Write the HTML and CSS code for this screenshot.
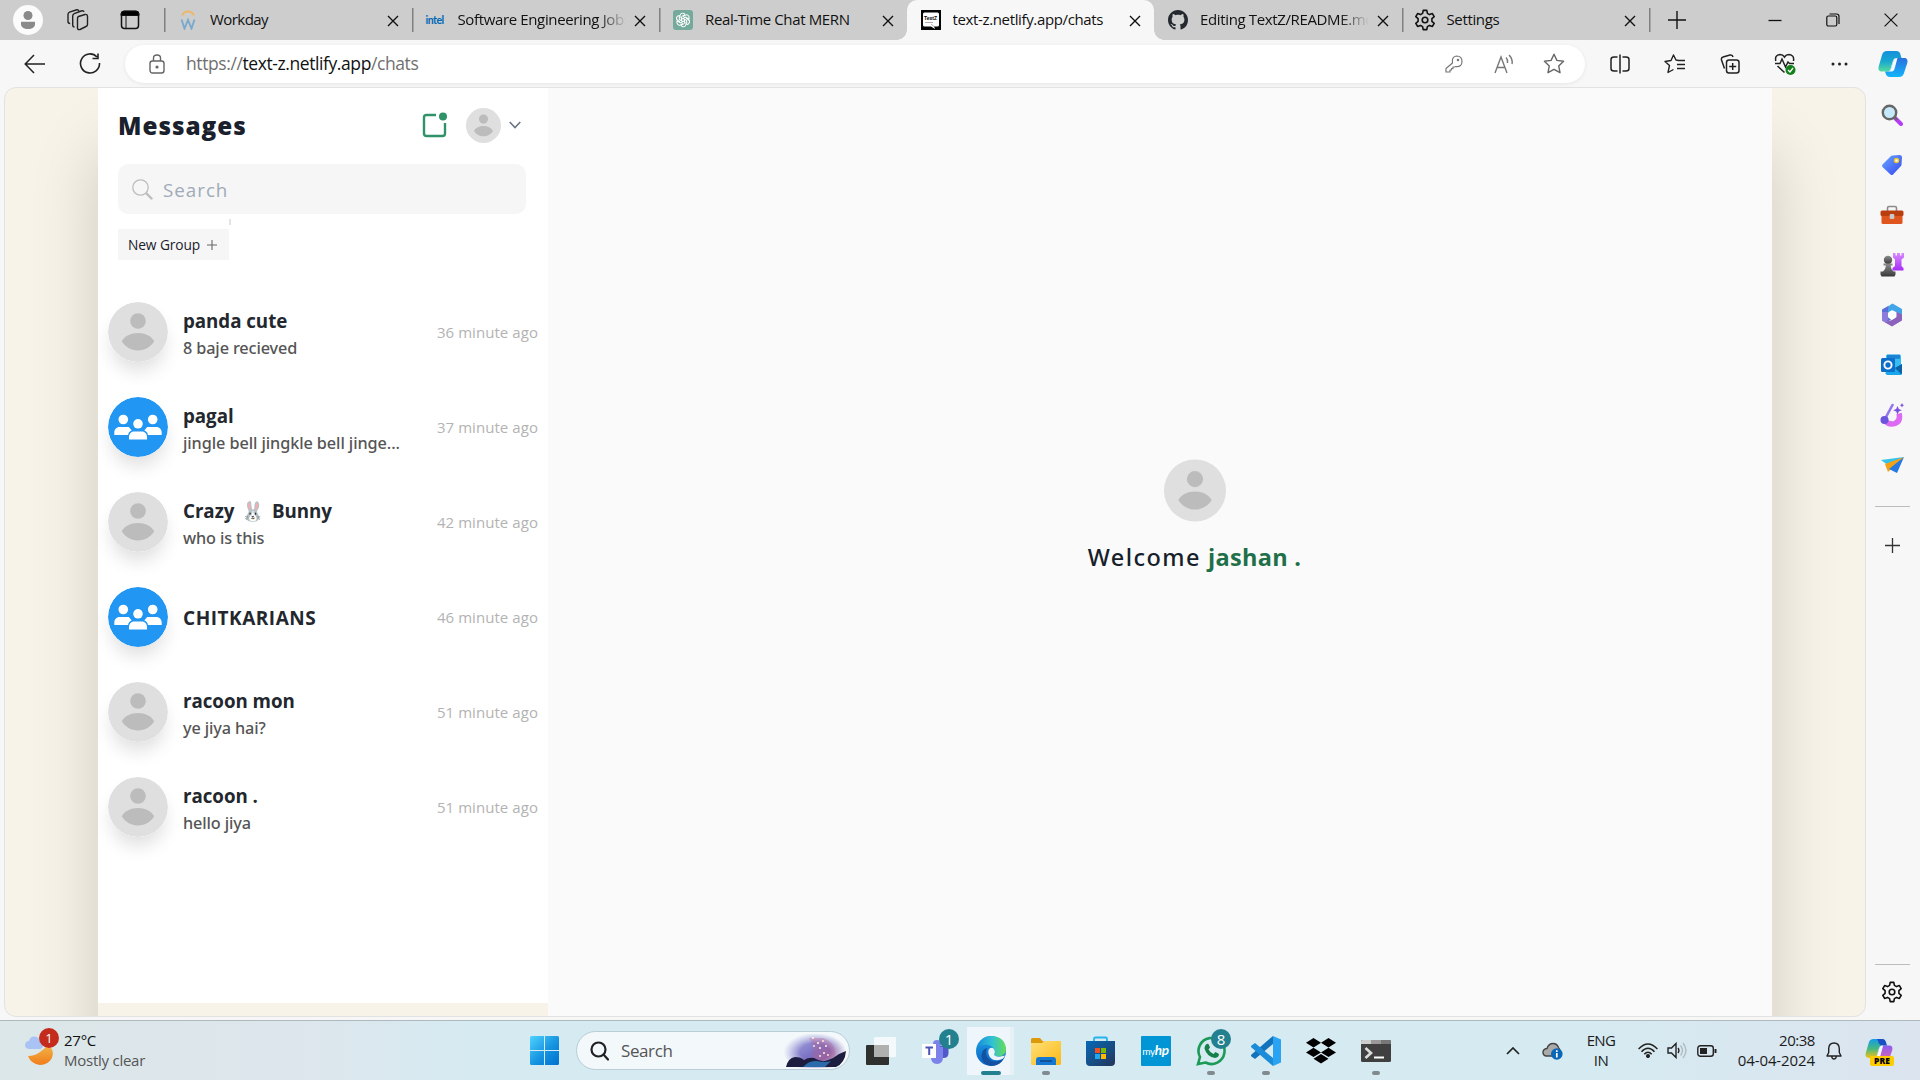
FILE: index.html
```html
<!DOCTYPE html>
<html lang="en">
<head>
<meta charset="utf-8">
<title>text-z.netlify.app/chats</title>
<link rel="stylesheet" href="styles.css">
</head>
<body>
<svg class="defs" aria-hidden="true">
  <defs>
    <linearGradient id="gWin" x1="0" y1="0" x2="1" y2="1"><stop offset="0" stop-color="#4fd3ff"/><stop offset=".55" stop-color="#1593e0"/><stop offset="1" stop-color="#0070d0"/></linearGradient>
    <linearGradient id="gEdgeA" x1="0" y1="0" x2="1" y2="0"><stop offset="0" stop-color="#1b8fd8"/><stop offset=".5" stop-color="#2fc1d6"/><stop offset="1" stop-color="#66dd55"/></linearGradient>
    <linearGradient id="gEdgeB" x1="0" y1="0" x2="0" y2="1"><stop offset="0" stop-color="#1da1e6"/><stop offset="1" stop-color="#0a62c4"/></linearGradient>
    <linearGradient id="gFolder" x1="0" y1="0" x2="1" y2="1"><stop offset="0" stop-color="#ffe07a"/><stop offset="1" stop-color="#fbb915"/></linearGradient>
    <linearGradient id="gStore" x1="0" y1="0" x2="1" y2="1"><stop offset="0" stop-color="#0669b8"/><stop offset="1" stop-color="#243559"/></linearGradient>
    <linearGradient id="gMoon" x1="0" y1="0" x2="0" y2="1"><stop offset="0" stop-color="#f2b54a"/><stop offset="1" stop-color="#f07d1a"/></linearGradient>
    <linearGradient id="gCopL" x1="0" y1="0" x2="0" y2="1"><stop offset="0" stop-color="#1590dd"/><stop offset=".5" stop-color="#18a8cf"/><stop offset="1" stop-color="#55dba0"/></linearGradient>
    <linearGradient id="gCopR" x1="0" y1="0" x2="0" y2="1"><stop offset="0" stop-color="#2a70de"/><stop offset="1" stop-color="#13b5fb"/></linearGradient>
    <linearGradient id="gPreL" x1="0" y1="0" x2="0" y2="1"><stop offset="0" stop-color="#149be8"/><stop offset=".5" stop-color="#42b883"/><stop offset="1" stop-color="#f2c314"/></linearGradient>
    <linearGradient id="gPreR" x1="0" y1="0" x2="0" y2="1"><stop offset="0" stop-color="#8a5cf2"/><stop offset="1" stop-color="#f0699a"/></linearGradient>
    <linearGradient id="gTag" x1="0" y1="0" x2="1" y2="1"><stop offset="0" stop-color="#6aaaff"/><stop offset="1" stop-color="#3545f0"/></linearGradient>
    <linearGradient id="gPawn" x1="0" y1="0" x2="0" y2="1"><stop offset="0" stop-color="#8d8d8d"/><stop offset="1" stop-color="#383838"/></linearGradient>
    <linearGradient id="gRook" x1="0" y1="0" x2="0" y2="1"><stop offset="0" stop-color="#d78bff"/><stop offset="1" stop-color="#a72cf7"/></linearGradient>
    <linearGradient id="gSky" x1="0" y1="0" x2="1" y2="1"><stop offset="0" stop-color="#b9c0ec"/><stop offset=".5" stop-color="#7c72c4"/><stop offset="1" stop-color="#a04f7f"/></linearGradient>
    <radialGradient id="gFade"><stop offset=".45" stop-color="#fff"/><stop offset=".95" stop-color="#000"/></radialGradient>
    <mask id="mSky"><ellipse cx="32" cy="18" rx="33" ry="20" fill="url(#gFade)"/></mask>

    <symbol id="x" viewBox="0 0 12 12"><path d="M1 1l10 10M11 1L1 11" stroke="currentColor" stroke-width="1.4" fill="none"/></symbol>
    <symbol id="plus" viewBox="0 0 18 18"><path d="M9 0v18M0 9h18" stroke="currentColor" stroke-width="1.4"/></symbol>
    <symbol id="avatar" viewBox="0 0 60 60"><circle cx="30" cy="30" r="30" fill="#dfdfdf"/><circle cx="30" cy="19" r="7.8" fill="#bcbcbc"/><path d="M13.8 39.3C16.5 34 23 31 30 31s13.500 3 16.200 8.300C43 44.700 37 48.500 30 48.500s-13-3.800-16.200-9.200z" fill="#bcbcbc"/></symbol>
    <symbol id="group" viewBox="0 0 60 60"><circle cx="30" cy="30" r="30" fill="#2196f3"/><g fill="#fff"><circle cx="15.300" cy="22.500" r="4.800"/><circle cx="44.700" cy="22.500" r="4.800"/><path d="M6.300 38v-2.500c0-3 2-5.500 5.500-5.500h9l3 3.500-3 4.500zM53.700 38v-2.500c0-3-2-5.500-5.500-5.500h-9l-3 3.500 3 4.500z"/></g><circle cx="30" cy="26.800" r="5.800" fill="#2196f3"/><path d="M20 43.500V39c0-3.500 2.500-6 6-6h8c3.500 0 6 2.500 6 6v4.500z" fill="#2196f3"/><circle cx="30" cy="26.800" r="4.800" fill="#fff"/><path d="M21 42.500V40c0-3.500 2.500-5.500 5.500-5.500h7c3 0 5.500 2 5.500 5.500v2.500z" fill="#fff"/></symbol>
    <symbol id="gear" viewBox="0 0 22 22"><path d="M9.200.9h3.600l.6 3 2.100 1.200 2.900-1 1.800 3.100-2.300 2v2.600l2.300 2-1.800 3.100-2.900-1-2.100 1.200-.6 3H9.200l-.6-3-2.100-1.200-2.900 1-1.800-3.100 2.300-2V9.200l-2.300-2 1.800-3.100 2.900 1 2.100-1.200z" transform="translate(0 .5)" fill="none" stroke="currentColor" stroke-width="1.600" stroke-linejoin="round"/><circle cx="11" cy="11" r="2.800" fill="none" stroke="currentColor" stroke-width="1.600"/></symbol>
    <symbol id="copilot" viewBox="0 0 30 28"><path d="M9 1h9c3 0 4 1.500 4.600 4L23.500 8H19c-2.500 0-3.600 1-4.300 3.500L12.500 19c-.7 2-1.800 2.500-3.500 2.500H4c-3 0-4-2-3.300-5L4 5c.8-2.700 2.300-4 5-4z" fill="url(#gCopL)"/><path d="M21 27h-9c-2.500 0-3.700-1.200-4.300-3.500L7 21.500h2.500c2 0 3-1 3.600-3L15.400 11c.7-2.300 1.900-3 4.100-3H26c3 0 4 2 3.300 5L26 23c-.8 2.700-2.300 4-5 4z" fill="url(#gCopR)"/><path d="M15.400 11c.7-2.300 1.900-3 4.100-3l-3 11c-.7 2-1.800 2.500-3.500 2.500H9.500c2 0 3-1 3.600-3z" fill="#f4fbff"/></symbol>
  </defs>
</svg>

<header class="tabs">
  <div class="tab-tools">
    <svg width="30" height="30" viewBox="0 0 30 30"><circle cx="15" cy="15" r="15" fill="#fbfbfb"/><circle cx="15" cy="10.500" r="4.500" fill="#8a8a8a"/><path d="M8 16.800h14V19c0 3.500-3 5-7 5s-7-1.500-7-5z" fill="#8a8a8a"/></svg>
    <svg class="ws" width="22" height="22" viewBox="0 0 22 22" fill="none" stroke="#222" stroke-width="1.400" stroke-linejoin="round"><path d="M11.500 7.500l6.500-2q2.500-.5 2.500 2v8q0 1.500-1.500 2l-6 3q-2.500.5-2.500-1.500V9.500q0-1.500 1-2zM7.500 18q-1.800 0-1.800-2V7q0-1.700 1.500-2.300l7-2.700q2.300-.7 2.800 1M3.200 14.500Q1 14.500 1 12.500v-7q0-1.700 1.500-2.300L9 1q2.300-.7 2.800 1"/></svg>
    <svg class="ta" width="20" height="20" viewBox="0 0 20 20"><rect x="1.500" y="1.500" width="17" height="17" rx="3" fill="none" stroke="#111" stroke-width="1.500"/><path d="M1 5.500V4q0-3 3-3h12q3 0 3 3v1.500zM6 6v12.500" fill="#000" stroke="#111" stroke-width="1"/></svg>
  </div>
  <div class="tab sep">
    <svg class="fav" width="20" height="20" viewBox="0 0 20 20"><path d="M4 5.500a6.500 6.500 0 0 1 12 0" fill="none" stroke="#efb868" stroke-width="1.800"/><path d="M3.500 9.500l3 9L10 10l3.500 8.500 3-9" fill="none" stroke="#79a9cc" stroke-width="1.900"/></svg>
    <span class="title t-workday">Workday</span><svg class="close"><use href="#x"/></svg>
  </div>
  <div class="tab sep">
    <span class="fav intel">intel</span>
    <span class="title fade">Software Engineering Jobs</span><svg class="close"><use href="#x"/></svg>
  </div>
  <div class="tab sep">
    <svg class="fav" width="20" height="20" viewBox="0 0 20 20"><rect width="20" height="20" rx="3" fill="#74aa9c"/><g fill="none" stroke="#fff" stroke-width="1"><path id="petal" d="M7 8.200V5.800q0-2.600 2.700-2.600 1.600 0 2.400 1.200L8.600 6.500v4.600"/><use href="#petal" transform="rotate(60 10 10)"/><use href="#petal" transform="rotate(120 10 10)"/><use href="#petal" transform="rotate(180 10 10)"/><use href="#petal" transform="rotate(240 10 10)"/><use href="#petal" transform="rotate(300 10 10)"/></g></svg>
    <span class="title">Real-Time Chat MERN</span><svg class="close"><use href="#x"/></svg>
  </div>
  <div class="tab active">
    <svg class="fav" width="20" height="20" viewBox="0 0 20 20"><rect width="20" height="20" fill="#050505"/><path d="M3.500 2.500h13q1.500 0 1.500 1.500v11q0 1.500-1.500 1.500H13l1 2.500-4-2.500H3.500Q2 16.500 2 15V4q0-1.500 1.500-1.500z" fill="#fff"/><text x="3" y="9.500" class="txz">TextZ</text><path d="M4 12.500h8M10 14l3 2.500" stroke="#999" stroke-width=".8"/></svg>
    <span class="title">text-z.netlify.app/chats</span><svg class="close"><use href="#x"/></svg>
  </div>
  <div class="tab">
    <svg class="fav" width="20" height="20" viewBox="0 0 16 16"><path fill="#24292f" d="M8 0C3.580 0 0 3.580 0 8c0 3.540 2.290 6.530 5.470 7.590.4.070.55-.17.55-.38 0-.19-.01-.82-.01-1.490-2.010.37-2.530-.49-2.690-.94-.09-.23-.48-.94-.82-1.130-.28-.15-.68-.52-.01-.53.630-.01 1.080.58 1.230.82.720 1.210 1.870.87 2.330.66.070-.52.280-.87.510-1.070-1.780-.2-3.640-.89-3.640-3.950 0-.87.310-1.590.82-2.150-.08-.2-.36-1.020.08-2.120 0 0 .67-.21 2.200.82.640-.18 1.320-.27 2-.27s1.360.09 2 .27c1.530-1.040 2.200-.82 2.200-.82.440 1.100.16 1.920.08 2.120.51.560.82 1.270.82 2.150 0 3.070-1.870 3.750-3.650 3.950.29.25.54.73.54 1.480 0 1.070-.01 1.930-.01 2.200 0 .21.15.46.55.38A8.010 8.010 0 0 0 16 8c0-4.420-3.580-8-8-8z"/></svg>
    <span class="title fade">Editing TextZ/README.md at</span><svg class="close"><use href="#x"/></svg>
  </div>
  <div class="tab sep">
    <svg class="fav cogfav" width="22" height="22"><use href="#gear"/></svg>
    <span class="title">Settings</span><svg class="close"><use href="#x"/></svg>
  </div>
  <div class="newtab"><svg width="18" height="18"><use href="#plus"/></svg></div>
  <div class="win">
    <svg width="13" height="13" viewBox="0 0 13 13"><path d="M0 6.500h13" stroke="#111" stroke-width="1.300"/></svg>
    <svg width="14" height="14" viewBox="0 0 14 14" fill="none" stroke="#111" stroke-width="1.200"><rect x=".8" y="3" width="10" height="10" rx="1.500"/><path d="M3.500 1h7q2.500 0 2.500 2.500V11"/></svg>
    <svg width="14" height="14" viewBox="0 0 12 12"><path d="M.5.500l11 11M11.500.500l-11 11" stroke="#111" stroke-width="1"/></svg>
  </div>
</header>

<div class="toolbar">
  <div class="nav">
    <svg width="22" height="20" viewBox="0 0 22 20" fill="none" stroke="#222" stroke-width="1.500"><path d="M21 10H1.500M10 1L1.200 10l8.800 9"/></svg>
    <svg width="22" height="22" viewBox="0 0 22 22" fill="none" stroke="#222" stroke-width="1.600"><path d="M18 4A9.500 9.500 0 1 0 20.500 10M19 .5v5h-5.500"/></svg>
  </div>
  <div class="address">
    <svg width="16" height="20" viewBox="0 0 16 20" fill="none" stroke="#666" stroke-width="1.400"><rect x="1" y="7" width="14" height="12" rx="2.500"/><path d="M4.500 7V4q0-3 3.500-3t3.500 3v3"/><circle cx="8" cy="13" r=".9" fill="#666"/></svg>
    <span class="url">https://<b>text-z.netlify.app</b>/chats</span>
    <div class="addr-icons">
      <svg width="18" height="18" viewBox="0 0 18 18" fill="none" stroke="#777" stroke-width="1.200" stroke-linejoin="round"><path d="M1 17v-3.500L7.500 8Q6.500 1.500 11.500 1 17 1 17 6.500T11 11.500L9.500 12H8v1.500H6.500V15H5v2z"/><circle cx="13" cy="5" r=".7"/></svg>
      <svg width="20" height="20" viewBox="0 0 20 20" fill="none" stroke="#777" stroke-width="1.400"><path d="M1 19L7 3l6 16M3.500 13.500h7M12 3.500q2 2 1.500 5.500M15 1q4 4 3 9"/></svg>
      <svg width="22" height="21" viewBox="0 0 22 21" fill="none" stroke="#666" stroke-width="1.400" stroke-linejoin="round"><path d="M11 1.200l2.900 6.200 6.700.8-4.900 4.700 1.300 6.800-6-3.300-6 3.300 1.300-6.800L1.400 8.200l6.700-.8z"/></svg>
    </div>
  </div>
  <div class="ext">
    <svg width="20" height="20" viewBox="0 0 20 20" fill="none" stroke="#222" stroke-width="1.500"><path d="M7.500 3H4Q1 3 1 5.500v9Q1 17 4 17h3.500M12.500 3H16q3 0 3 2.500v9q0 2.500-3 2.500h-3.500M10 .5v19"/></svg>
    <svg width="21" height="20" viewBox="0 0 21 20" fill="none" stroke="#222" stroke-width="1.400" stroke-linejoin="round"><path d="M14.500 6.500L12 6l-2.500-5L7 6.500 1 7.500l4.500 4L4 18.500l5.500-3M14.500 6.500H21M13 10.500h8M13 14.500h8"/></svg>
    <svg width="20" height="20" viewBox="0 0 20 20" fill="none" stroke="#222" stroke-width="1.500"><rect x="6.500" y="6" width="12.500" height="13" rx="2.500"/><path d="M4.500 14.500L1.500 6Q1 3.500 3 3l7-2q2.500-.5 3 2M12.700 9v7M9.200 12.500h7"/></svg>
    <svg width="22" height="22" viewBox="0 0 22 22" fill="none" stroke="#222" stroke-width="1.500"><path d="M1.800 8Q.5 2 6 1.500q3 0 4.500 2.500Q12 1.500 15 1.500 20.500 2 19.500 8M1 10.500h5L8 6l3.500 8L14 9l1.500 1.500H20M3.500 13l7 6.500"/><circle cx="16.500" cy="17" r="5" fill="#12801a" stroke="none"/><path d="M14 17l2 2 3-4" stroke="#fff" stroke-width="1.300"/></svg>
    <svg width="17" height="4" viewBox="0 0 17 4" fill="#222"><circle cx="2" cy="2" r="1.500"/><circle cx="8.500" cy="2" r="1.500"/><circle cx="15" cy="2" r="1.500"/></svg>
    <svg width="30" height="28"><use href="#copilot"/></svg>
  </div>
</div>

<div class="middle">
  <div class="viewport">
    <div class="app">
      <aside class="left">
        <div class="head">
          <h1>Messages</h1>
          <svg width="26" height="26" viewBox="0 0 26 26"><path d="M14 3H4.500Q2 3 2 5.500v16Q2 24 4.500 24h16q2.500 0 2.500-2.500V11" fill="none" stroke="#2f9268" stroke-width="2.400"/><circle cx="21" cy="4.500" r="4" fill="#2f9268"/></svg>
          <svg class="me" width="35" height="35"><use href="#avatar"/></svg>
          <svg width="12" height="8" viewBox="0 0 12 8"><path d="M.7 1L6 6.500 11.300 1" fill="none" stroke="#6b7480" stroke-width="1.600"/></svg>
        </div>
        <div class="search">
          <svg width="21" height="21" viewBox="0 0 21 21" fill="none" stroke="#bdbdbd"><circle cx="8.500" cy="8.500" r="7.700" stroke-width="1.300"/><path d="M14.500 14.500l5 5" stroke-width="2.400" stroke-linecap="round"/></svg>
          <span>Search</span>
        </div>
        <div class="tick"></div>
        <div class="newgroup"><span>New Group</span><svg width="10" height="10" viewBox="0 0 10 10"><path d="M5 0v10M0 5h10" stroke="#666" stroke-width="1.100"/></svg></div>
        <div class="chats">
          <div class="chat"><svg class="pic"><use href="#avatar"/></svg><div class="txt"><b>panda cute</b><span>8 baje recieved</span></div><time>36 minute ago</time></div>
          <div class="chat"><svg class="pic"><use href="#group"/></svg><div class="txt"><b>pagal</b><span class="long">jingle bell jingkle bell jinge...</span></div><time>37 minute ago</time></div>
          <div class="chat"><svg class="pic"><use href="#avatar"/></svg><div class="txt"><b class="bunny">Crazy <i>🐰</i> Bunny</b><span>who is this</span></div><time>42 minute ago</time></div>
          <div class="chat"><svg class="pic"><use href="#group"/></svg><div class="txt"><b class="caps">CHITKARIANS</b></div><time>46 minute ago</time></div>
          <div class="chat"><svg class="pic"><use href="#avatar"/></svg><div class="txt"><b>racoon mon</b><span>ye jiya hai?</span></div><time>51 minute ago</time></div>
          <div class="chat"><svg class="pic"><use href="#avatar"/></svg><div class="txt"><b>racoon .</b><span>hello jiya</span></div><time>51 minute ago</time></div>
        </div>
      </aside>
      <main class="right">
        <svg width="62" height="63"><use href="#avatar"/></svg>
        <p><span class="wel">Welcome</span><b>jashan .</b></p>
      </main>
    </div>
  </div>
  <nav class="side">
    <svg width="22" height="22" viewBox="0 0 22 22"><path d="M14 14l6 6" stroke="#b53cf5" stroke-width="4" stroke-linecap="round"/><path d="M13 13l3 3" stroke="#666" stroke-width="2"/><circle cx="8.500" cy="8.500" r="6.700" fill="#c5e8fa" stroke="#666" stroke-width="2.400"/></svg>
    <svg width="22" height="22" viewBox="0 0 22 22"><path d="M11.500 1.500L18.500 1q2.500 0 2.500 2.500l-.5 7q0 1-1 2l-7.500 8q-1 1-2.500 0l-8-7.500q-1-1.200 0-2.500l8-8q1-1 2-1z" fill="url(#gTag)"/><circle cx="15.500" cy="6.500" r="2" fill="#fff" stroke="#f3c622" stroke-width="1.500"/></svg>
    <svg width="24" height="20" viewBox="0 0 24 20"><path d="M7.500 6V3q0-1.500 1.500-1.500h6q1.500 0 1.500 1.500v3" fill="none" stroke="#8b8b8b" stroke-width="1.600"/><rect x="1.500" y="9" width="21" height="10" rx="1.500" fill="#e0551d"/><rect x=".5" y="5.500" width="23" height="5.500" rx="1.500" fill="#b83e10"/><rect x="9.700" y="9" width="4.600" height="5" rx="1" fill="#c9c9c9"/></svg>
    <svg width="24" height="24" viewBox="0 0 24 24"><path d="M13 0h2.500v2.500H17V0h3v2.500h1.500V0H24v4.500l-2.500 2V13l2 2v2.500H12.500V15l2.500-2V6.500l-2-2z" fill="url(#gRook)"/><circle cx="8" cy="7" r="4.200" fill="url(#gPawn)"/><path d="M3.500 10.500h9v2H10.500q.5 4 3 6H15.500v3l-1 2H1.500l-1-2v-3H3q2.500-2 3-6H3.500z" fill="url(#gPawn)"/></svg>
    <svg width="22" height="24" viewBox="0 0 22 24"><path d="M9 2l2.500-1.500L21 6v7l-6-4-4-2-4 3V4.500z" fill="#41a5e8"/><path d="M8 2.500L1 6.500v11L6 19l4-2.500L7 14V6z" fill="#5b6fd8"/><path d="M1.500 18l9.500 5.500 10-6v-6L15.500 9v5L11 17l-5 1.500z" fill="#8b63bd"/><path d="M1 9v8.500L5 19l2-3V9z" fill="#8f7bdc"/><circle cx="11" cy="12" r="4" fill="#fff"/></svg>
    <svg width="22" height="22" viewBox="0 0 22 22"><rect x="5" y=".5" width="15" height="20" rx="1.500" fill="#38bdf2"/><path d="M6 .8h13v4H6z" fill="#1b82d4"/><path d="M13 14l8-4v9.500q0 1.500-1.500 1.500H6L4 19z" fill="#1aa6ea"/><path d="M21 10v9q0 1-1 1l-6-6z" fill="#0c62a8"/><rect x="0" y="4" width="14" height="14" rx="1.500" fill="#0c6fc9"/><circle cx="7" cy="11" r="3.600" fill="none" stroke="#fff" stroke-width="1.900"/></svg>
    <svg width="24" height="25" viewBox="0 0 24 25"><path d="M19 10.500q2 7.500-4 10-6 2-10-3" fill="none" stroke="#dd6af3" stroke-width="5.500"/><path d="M12.500 2L6 14" stroke="#9476ee" stroke-width="2.600" stroke-linecap="round"/><circle cx="4.500" cy="17" r="4" fill="#6b55dc"/><path d="M17.500 3l1.300 3 3 1.300-3 1.300-1.300 3-1.300-3-3-1.300 3-1.300zM22 0l.7 1.600L24 2.300l-1.300.7L22 4.600 21.300 3l-1.300-.7 1.300-.7z" fill="#7b4fe0"/></svg>
    <svg width="23" height="17" viewBox="0 0 23 17"><path d="M0 3L23 0 8 9z" fill="#34c3ea"/><path d="M4 7L23 0 7 15z" fill="#f5a114"/><path d="M23 0L8 12l8 4z" fill="#2579e2"/></svg>
    <div class="rule"></div>
    <svg class="add" width="15" height="15" viewBox="0 0 15 15"><path d="M7.500 0v15M0 7.500h15" stroke="#333" stroke-width="1.300"/></svg>
    <div class="rule low"></div>
    <svg class="cog" width="22" height="22"><use href="#gear"/></svg>
  </nav>
</div>

<footer class="taskbar">
  <div class="weather">
    <div class="wicon">
      <svg width="30" height="36" viewBox="0 0 30 36"><path d="M3 25Q10 25 15 21q4-3 8-7 7 5 4 13-4 7-12 7Q6 33 3 25z" fill="url(#gMoon)"/><path d="M3.500 18Q0 17 0 14q.5-4 4-4 1-5 6-4.500 4 .5 5 4.500 3 .5 3 4t-3 4z" fill="#a9c4f4"/></svg>
      <span class="badge red">1</span>
    </div>
    <div class="wtext"><span>27°C</span><span class="sub">Mostly clear</span></div>
  </div>
  <svg class="start" width="29" height="29" viewBox="0 0 29 29"><path d="M1.500 0H14v14H0V1.500Q0 0 1.500 0zM15 0h12.500Q29 0 29 1.500V14H15zM0 15h14v14H1.500Q0 29 0 27.500zM15 15h14v12.500q0 1.500-1.500 1.500H15z" fill="url(#gWin)"/></svg>
  <div class="tsearch">
    <svg width="19" height="20" viewBox="0 0 19 20" fill="none" stroke="#222" stroke-width="2.200"><circle cx="8.500" cy="8.500" r="7"/><path d="M13.500 13.500l4.500 5" stroke-linecap="round"/></svg>
    <span>Search</span>
    <svg class="art" width="64" height="34" viewBox="0 0 64 34"><ellipse cx="32" cy="18" rx="33" ry="20" fill="url(#gSky)" mask="url(#mSky)"/><path d="M26 4q6 8 4 14-2 6 8 9l14-4q2-14-12-19z" fill="#c25a86" opacity=".3"/><path d="M3 33q2-9 9-10 6 0 9 3 5-3 10-2 8 5 14 2 6-2 11-6l7-3q-1 12-10 16z" fill="#1c1d3f"/><path d="M20 33q6-7 14-6 8 2 14 0l-6 6z" fill="#2a6bab"/><g fill="#fff3dc"><circle cx="30" cy="4" r="1"/><circle cx="35" cy="9" r="1.100"/><circle cx="40" cy="7" r=".9"/><circle cx="37" cy="14" r="1"/><circle cx="43" cy="12" r="1"/><circle cx="31" cy="12" r=".9"/><circle cx="41" cy="19" r="1"/><circle cx="37" cy="22" r=".9"/><circle cx="45" cy="21" r=".9"/></g></svg>
  </div>
  <div class="apps">
    <div class="appi"><svg width="30" height="28" viewBox="0 0 30 28"><rect y="8" width="23" height="20" rx="1" fill="#30302e"/><rect x="8" y="0" width="22" height="20" rx="1" fill="#fff" opacity=".72"/><rect x="8" y="8" width="15" height="12" fill="#aaa" opacity=".8"/></svg></div>
    <div class="appi teams"><svg width="27" height="28" viewBox="0 0 27 28"><circle cx="15" cy="7" r="4" fill="#7b83eb"/><path d="M18 9h8.500v7q0 5-5 5H18z" fill="#5059c9"/><path d="M9 10h12v10q0 7-6 7t-6-7z" fill="#7b83eb"/><rect x="0" y="7" width="14" height="14" fill="#fff"/><path d="M3.500 10.500h7.500M7.200 10.500V18" stroke="#4b53bc" stroke-width="2"/></svg><span class="badge teal">1</span></div>
    <div class="appi current"><svg width="30" height="30" viewBox="0 0 30 30"><circle cx="15" cy="15" r="15" fill="url(#gEdgeB)"/><path d="M2 11Q5 0 16 0q13 1 14 13 0 7-7 7.500-4 0-5-1.500 2-3 0-6Q14 8 8 9q-4 .5-6 2z" fill="url(#gEdgeA)"/><path d="M11 12q-3 8 3 12 6 4 14-2-4 8-13 8Q6 28 5.500 20 6 13 11 12z" fill="#1352a0"/><path d="M12.500 14q2-3.500 5-1.500 2.500 3 .5 6.500 3 3 11 .5-1.500 4-6 4.500-7 1-9.500-3.500-2-3-1-6.500z" fill="#edf4fb"/></svg><i class="bar"></i></div>
    <div class="appi"><svg width="30" height="28" viewBox="0 0 30 28"><path d="M0 2.500Q0 1 1.500 1H9l3 3.500h18V9H0z" fill="#dc9a0b"/><path d="M0 6h11l3-2h15q1 0 1 1v21.500q0 1.500-1.500 1.500h-27Q0 28 0 26.500z" fill="url(#gFolder)"/><path d="M5 28v-5q0-3 3-3h14q3 0 3 3v5z" fill="#1478d0"/><path d="M9 24h12" stroke="#07498c" stroke-width="1.500"/></svg><i class="dot"></i></div>
    <div class="appi"><svg width="29" height="30" viewBox="0 0 29 30"><path d="M8 6V3q0-1.500 1.500-1.500h10Q21 1.500 21 3v3" fill="none" stroke="#25b3f0" stroke-width="1.800"/><path d="M0 5h29v21q0 4-4 4H4q-4 0-4-4z" fill="url(#gStore)"/><path d="M9 12h5v5H9z" fill="#f25022"/><path d="M15 12h5v5h-5z" fill="#7fba00"/><path d="M9 18h5v5H9z" fill="#20a8ee"/><path d="M15 18h5v5h-5z" fill="#ffb900"/></svg></div>
    <div class="appi"><div class="hp">my<b>hp</b></div></div>
    <div class="appi"><svg width="30" height="30" viewBox="0 0 30 30"><path d="M2 28l2-7A13 13 0 1 1 9.500 26.500z" fill="none" stroke="#1c9a57" stroke-width="2.600"/><path d="M10 8.500q1-1 2.500-.5l1.500 3.500-1.500 2q2 3.500 5 4.500l2-2 3.500 2q0 3.500-4 4Q11 21 8.500 12.500 8.500 10 10 8.500z" fill="#158048"/></svg><span class="badge teal">8</span><i class="dot"></i></div>
    <div class="appi"><svg width="30" height="30" viewBox="0 0 30 30"><path d="M22 0l8 3.500v23L22 30z" fill="#2aa4f2"/><path d="M22 0v8L4 23 .5 20.500Q-.5 19.500.5 18.500z" fill="#1273bd"/><path d="M22 30v-8L4 7 .5 9.500q-1 1 0 2z" fill="#1c8cd8"/></svg><i class="dot"></i></div>
    <div class="appi"><svg width="30" height="26" viewBox="0 0 30 26"><path d="M7.500 0L15 4.700 7.500 9.400 0 4.700zM22.500 0L30 4.700l-7.500 4.700L15 4.700zM7.500 9.700L15 14.400l-7.500 4.700L0 14.400zM22.500 9.700L30 14.400l-7.500 4.700L15 14.400zM15 16l7.500 4.700L15 25.500l-7.500-4.800z" fill="#000"/></svg></div>
    <div class="appi"><svg width="30" height="22" viewBox="0 0 30 22"><rect width="30" height="22" rx="1.500" fill="#404040"/><path d="M0 4V1.500Q0 0 1.500 0H10v4z" fill="#ccc"/><path d="M10 0h10v4H10z" fill="#999"/><path d="M20 0h8.500Q30 0 30 1.500V4H20z" fill="#777"/><path d="M4.500 8l5.500 5-5.500 5" fill="none" stroke="#ddd" stroke-width="2.600"/><path d="M13 17.500h10" stroke="#fff" stroke-width="2"/></svg><i class="dot"></i></div>
  </div>
  <div class="tray">
    <svg width="14" height="8" viewBox="0 0 14 8"><path d="M1 7l6-6 6 6" fill="none" stroke="#222" stroke-width="1.700"/></svg>
    <svg class="cloud" width="21" height="18" viewBox="0 0 21 18"><path d="M4 14Q1 13.500 1 10.500 1 7 5 6.500 6.500 1.500 11 1.500q4 0 5.500 4L18 8l-8 6z" fill="#aaa" stroke="#444" stroke-width="1.400"/><circle cx="14.800" cy="12" r="5.800" fill="#0a67b8"/><path d="M14.800 11v4.500M14.800 8.300v1.700" stroke="#fff" stroke-width="1.700"/></svg>
    <div class="lang"><span>ENG</span><span>IN</span></div>
    <svg class="wifi" width="20" height="15" viewBox="0 0 20 15" fill="none" stroke="#222" stroke-width="1.500"><path d="M.6 6Q10-4 19.400 6M3.500 8.700q6.500-7 13 0M6.300 11.300q3.700-4 7.400 0"/><circle cx="10" cy="13" r="1.300" fill="#222"/></svg>
    <svg class="vol" width="20" height="17" viewBox="0 0 20 17" fill="none" stroke="#222" stroke-width="1.400"><path d="M1 6h3.500L9 1.500v14L4.500 11H1zM11 6q1.800 2.500 0 5"/><path d="M13.500 3.500q4 5 0 10M16 1q6 7.500 0 15" stroke="#b0bcc2"/></svg>
    <svg class="bat" width="20" height="12" viewBox="0 0 20 12"><rect x=".8" y=".8" width="15.500" height="10.400" rx="2.500" fill="none" stroke="#222" stroke-width="1.400"/><rect x="3" y="3" width="7" height="6" fill="#222"/><path d="M17.500 4H19.500v4h-2z" fill="#222"/></svg>
    <div class="clock"><span class="hm">20:38</span><span>04-04-2024</span></div>
    <svg class="bell" width="16" height="18" viewBox="0 0 16 18" fill="none" stroke="#222" stroke-width="1.400" stroke-linejoin="round"><path d="M1 14l1.700-3.500V6.500Q3 1 8 1t5.300 5.500v4L15 14zM5.800 14.500q.2 2.500 2.200 2.500t2.200-2.500"/></svg>
    <div class="pre"><svg width="30" height="26" viewBox="0 0 30 28"><path d="M9 1h9c3 0 4 1.500 4.600 4L23.500 8H19c-2.500 0-3.600 1-4.300 3.500L12.500 19c-.7 2-1.800 2.500-3.500 2.500H4c-3 0-4-2-3.300-5L4 5c.8-2.700 2.300-4 5-4z" fill="url(#gPreL)"/><path d="M13 1h5c3 0 4 1.500 4.600 4L23.500 8H19q-3 0-4-2z" fill="#1d4fc4"/><path d="M21 27h-9c-2.500 0-3.700-1.200-4.300-3.500L7 21.500h2.500c2 0 3-1 3.600-3L15.400 11c.7-2.300 1.900-3 4.100-3H26c3 0 4 2 3.300 5L26 23c-.8 2.700-2.300 4-5 4z" fill="url(#gPreR)"/><path d="M15.400 11c.7-2.300 1.900-3 4.100-3l-3 11c-.7 2-1.800 2.500-3.500 2.500H9.500c2 0 3-1 3.600-3z" fill="#f4fbff"/></svg><span>PRE</span></div>
  </div>
</footer>
</body>
</html>
```
FILE: styles.css
```css
* { box-sizing: border-box; }
body {
  margin: 0;
  width: 1920px;
  height: 1080px;
  overflow: hidden;
  display: flex;
  flex-direction: column;
  background: #f7f7f7;
  font-family: "Open Sans", "Noto Sans", sans-serif;
  color: #111;
}
svg { display: block; flex: none; }
.defs { position: absolute; width: 0; height: 0; }

/* tab strip */
.tabs { height: 40px; flex: none; display: flex; background: #cdcdcd; }
.tab-tools { width: 164px; display: flex; align-items: center; padding-left: 13px; flex: none; }
.ws { margin-left: 24px; }
.ta { margin-left: 31px; }
.tab {
  width: 247.500px;
  flex: none;
  padding: 0 13px 0 14px;
  display: flex;
  align-items: center;
  font-size: 15px;
  letter-spacing: -.36px;
  white-space: nowrap;
}
.tab.sep, .newtab { background: linear-gradient(#808080, #808080) 0 8px / 1.500px 24px no-repeat; }
.tab.active { position: relative; background: #f7f7f7; border-radius: 10px 10px 0 0; }
.tab.active::before, .tab.active::after {
  content: "";
  position: absolute;
  bottom: 0;
  width: 10px;
  height: 10px;
}
.tab.active::before { left: -10px; background: radial-gradient(circle at 0 0, #cdcdcd 9.500px, #f7f7f7 10px); }
.tab.active::after { right: -10px; background: radial-gradient(circle at 100% 0, #cdcdcd 9.500px, #f7f7f7 10px); }
.fav { flex: none; width: 20px; }
.cogfav { width: 22px; margin: 0 -1px 0 -2px; }
.intel { color: #0068b5; font: 700 10.500px "Lato", sans-serif; letter-spacing: -.5px; }
.title { width: 168px; margin-left: 12px; overflow: hidden; line-height: 24px; margin-top: -2px; }
.t-workday { letter-spacing: -.55px; }
.fade { -webkit-mask: linear-gradient(90deg, #000 140px, transparent 169px); mask: linear-gradient(90deg, #000 140px, transparent 169px); }
.close { width: 12px; height: 12px; margin-left: 9px; margin-top: 1px; color: #111; }
.txz { font: 700 5px "Liberation Sans", sans-serif; letter-spacing: 0; }
.newtab { width: 56px; display: flex; align-items: center; justify-content: center; }
.win { margin-left: auto; display: flex; }
.win svg { margin: auto 22px; width: 14px; }

/* address row */
.toolbar { height: 47px; flex: none; display: flex; align-items: center; }
.nav { width: 125px; display: flex; padding-left: 24px; gap: 33px; align-items: center; }
.address {
  width: 1460px;
  height: 38px;
  border-radius: 19px;
  background: #fff;
  box-shadow: 0 1px 4px rgba(0, 0, 0, .07);
  display: flex;
  align-items: center;
  padding-left: 24px;
}
.url { margin-left: 21px; font-size: 17.500px; line-height: 24px; margin-top: -1px; letter-spacing: -.41px; color: #707070; }
.url b { color: #111; font-weight: 400; }
.addr-icons { margin-left: auto; margin-right: 5px; display: flex; align-items: center; }
.addr-icons svg { margin: 0 15px; }
.addr-icons svg:first-child { margin: 0 15px 0 16px; }
.addr-icons svg:nth-child(2) { margin: 0 14px 0 16px; }
.ext { margin-left: 7px; display: grid; grid-template-columns: repeat(5, 55px) 51px; align-items: center; justify-items: center; }

/* page area and sidebar */
.middle { height: 933px; flex: none; display: flex; }
.viewport {
  width: 1862px;
  height: 930px;
  margin-left: 4px;
  border: 1px solid #e2e2e2;
  border-radius: 12px;
  overflow: hidden;
  background: #f8f3e8;
  padding-left: 93px;
}
.app { width: 1674px; height: 930px; display: flex; background: #f8f3e8; box-shadow: 0 64px 62px rgba(0, 0, 0, .17); }
.left { width: 450px; height: 915px; background: #fff; display: flex; flex-direction: column; }
.right { flex: 1; background: #fafafa; display: flex; flex-direction: column; align-items: center; padding-top: 371px; }
.right svg { margin-right: -69px; }
.right p { margin: 12px -69px 0 0; line-height: 46px; display: flex; font-size: 23.500px; gap: 7px; }
.wel { font-family: "Noto Sans", sans-serif; font-weight: 500; letter-spacing: 1.450px; color: #16202a; }
.right b { color: #1f7048; letter-spacing: .3px; }

.head { height: 74px; margin-bottom: 2px; display: flex; align-items: center; padding-left: 20px; flex: none; }
h1 { margin: 0; width: 304px; font-size: 24.250px; font-weight: 800; letter-spacing: 1px; color: #1a202c; }
.me { margin: 0 8px 0 18px; }
.search {
  width: 408px;
  height: 50px;
  flex: none;
  margin-left: 20px;
  border-radius: 10px;
  background: #f6f6f6;
  display: flex;
  align-items: center;
  padding-left: 14px;
  gap: 10px;
  font-size: 18.750px;
  letter-spacing: 1px;
  color: #a0aab8;
}
.tick { width: 2px; height: 6px; flex: none; margin: 5px 0 4px 131px; background: #e2e2e8; }
.newgroup {
  width: 111px;
  height: 31px;
  flex: none;
  margin-left: 20px;
  padding-left: 10px;
  display: flex;
  align-items: center;
  gap: 7px;
  background: #f6f6f6;
  font-size: 13.750px;
  letter-spacing: -.1px;
  color: #1a202c;
}
.chats { margin-top: 22px; }
.chat { height: 95px; display: flex; align-items: center; padding: 5px 10px 0; background: #fff; }
.pic { width: 60px; height: 60px; border-radius: 50%; box-shadow: 0 12px 19px -4px rgba(0, 0, 0, .14); }
.txt { margin-left: 15px; padding-top: 4px; width: 230px; display: flex; flex-direction: column; white-space: nowrap; }
.txt b { font-size: 18.750px; line-height: 28px; letter-spacing: -.05px; color: #23272e; }
.txt b.caps { font-size: 19px; letter-spacing: .52px; margin-top: -2px; }
.txt i { font-style: normal; font-size: 19px; line-height: 20px; margin: 0 2px; }
.txt span { font-family: "Noto Sans", sans-serif; font-size: 16.250px; line-height: 26px; font-weight: 500; letter-spacing: -.13px; color: #555; }
.txt .long { letter-spacing: -.08px; }
.chat time { margin-left: auto; font-size: 15px; letter-spacing: .06px; color: #b3b3b3; margin-top: -1px; }

.side {
  width: 52px;
  display: grid;
  grid-template-rows: repeat(8, 50px) 32px 47px 396px 54px;
  justify-items: center;
  align-items: center;
  align-content: start;
  padding-top: 3px;
}
.rule { width: 35px; height: 1px; background: #bcbcbc; }
.rule.low { align-self: end; }

/* taskbar */
.taskbar {
  height: 60px;
  flex: none;
  display: flex;
  align-items: center;
  border-top: 1px solid #aeb8bd;
  background: linear-gradient(90deg, #dce7e9 0, #dde6ec 300px, #d6eaf1 460px, #d6eaf1 1600px, #dbe4ef 1920px);
  font-size: 15px;
}
.weather { width: 530px; display: flex; align-items: center; padding-left: 25px; }
.wicon { position: relative; width: 39px; height: 40px; }
.wtext { display: flex; flex-direction: column; line-height: 20px; letter-spacing: -.25px; margin-top: -2px; }
.sub { color: #555; }
.badge {
  position: absolute;
  width: 20px;
  height: 20px;
  border-radius: 50%;
  color: #fff;
  font-size: 13px;
  line-height: 20px;
  text-align: center;
}
.red { background: #c42b1c; left: 14px; top: -3px; }
.teal { background: #22808f; left: 28px; top: 2px; }
.tsearch {
  width: 274px;
  height: 39px;
  margin-left: 17px;
  border: 1px solid #b9cdd6;
  border-radius: 20px;
  background: #f3f8fb;
  display: flex;
  align-items: center;
  padding-left: 13px;
  font-size: 17px;
  letter-spacing: -.4px;
  color: #555;
}
.tsearch span { margin-left: 12px; width: 162px; }
.apps { margin-left: 3px; display: flex; }
.appi { position: relative; width: 55px; height: 48px; display: flex; align-items: center; justify-content: center; }
.teams .badge { left: 31px; }
.appi .badge { font-size: 15px; }
.current { background: linear-gradient(#eef5fb, #eef5fb) 4px 0 / 43px 48px no-repeat, linear-gradient(#e6f1f7, #e6f1f7) 8px 0 / 43px 48px no-repeat; }
.bar, .dot { position: absolute; bottom: 0; left: 50%; border-radius: 2px; height: 4px; }
.bar { width: 20px; margin-left: -10px; background: #22808f; }
.dot { width: 8px; margin-left: -4px; background: #818b8f; }
.hp { width: 30px; height: 30px; background: #0096d6; color: #fff; font: 10px/29px "Lato", sans-serif; text-align: center; letter-spacing: -.3px; border-radius: 1px; }
.hp b { font-size: 13.500px; font-style: italic; }
.tray { margin-left: auto; width: 414px; display: flex; align-items: center; color: #1c1c1c; }
.cloud { margin-left: 22px; }
.lang { width: 36px; margin: -2px 0 0 20px; display: flex; flex-direction: column; align-items: center; line-height: 20px; letter-spacing: -.6px; }
.wifi { margin-left: 19px; }
.vol { margin-left: 9px; }
.bat { margin-left: 10px; }
.clock { width: 98px; margin-top: -2px; display: flex; flex-direction: column; align-items: flex-end; line-height: 20px; letter-spacing: -.1px; }
.hm { letter-spacing: -.45px; }
.bell { margin-left: 11px; }
.pre { position: relative; margin-left: 22px; }
.pre span { position: absolute; left: 6px; top: 18px; width: 24px; height: 10px; border-radius: 2px; background: #fc0; color: #000; font: 800 8.500px/10px "Open Sans", sans-serif; text-align: center; }
```
